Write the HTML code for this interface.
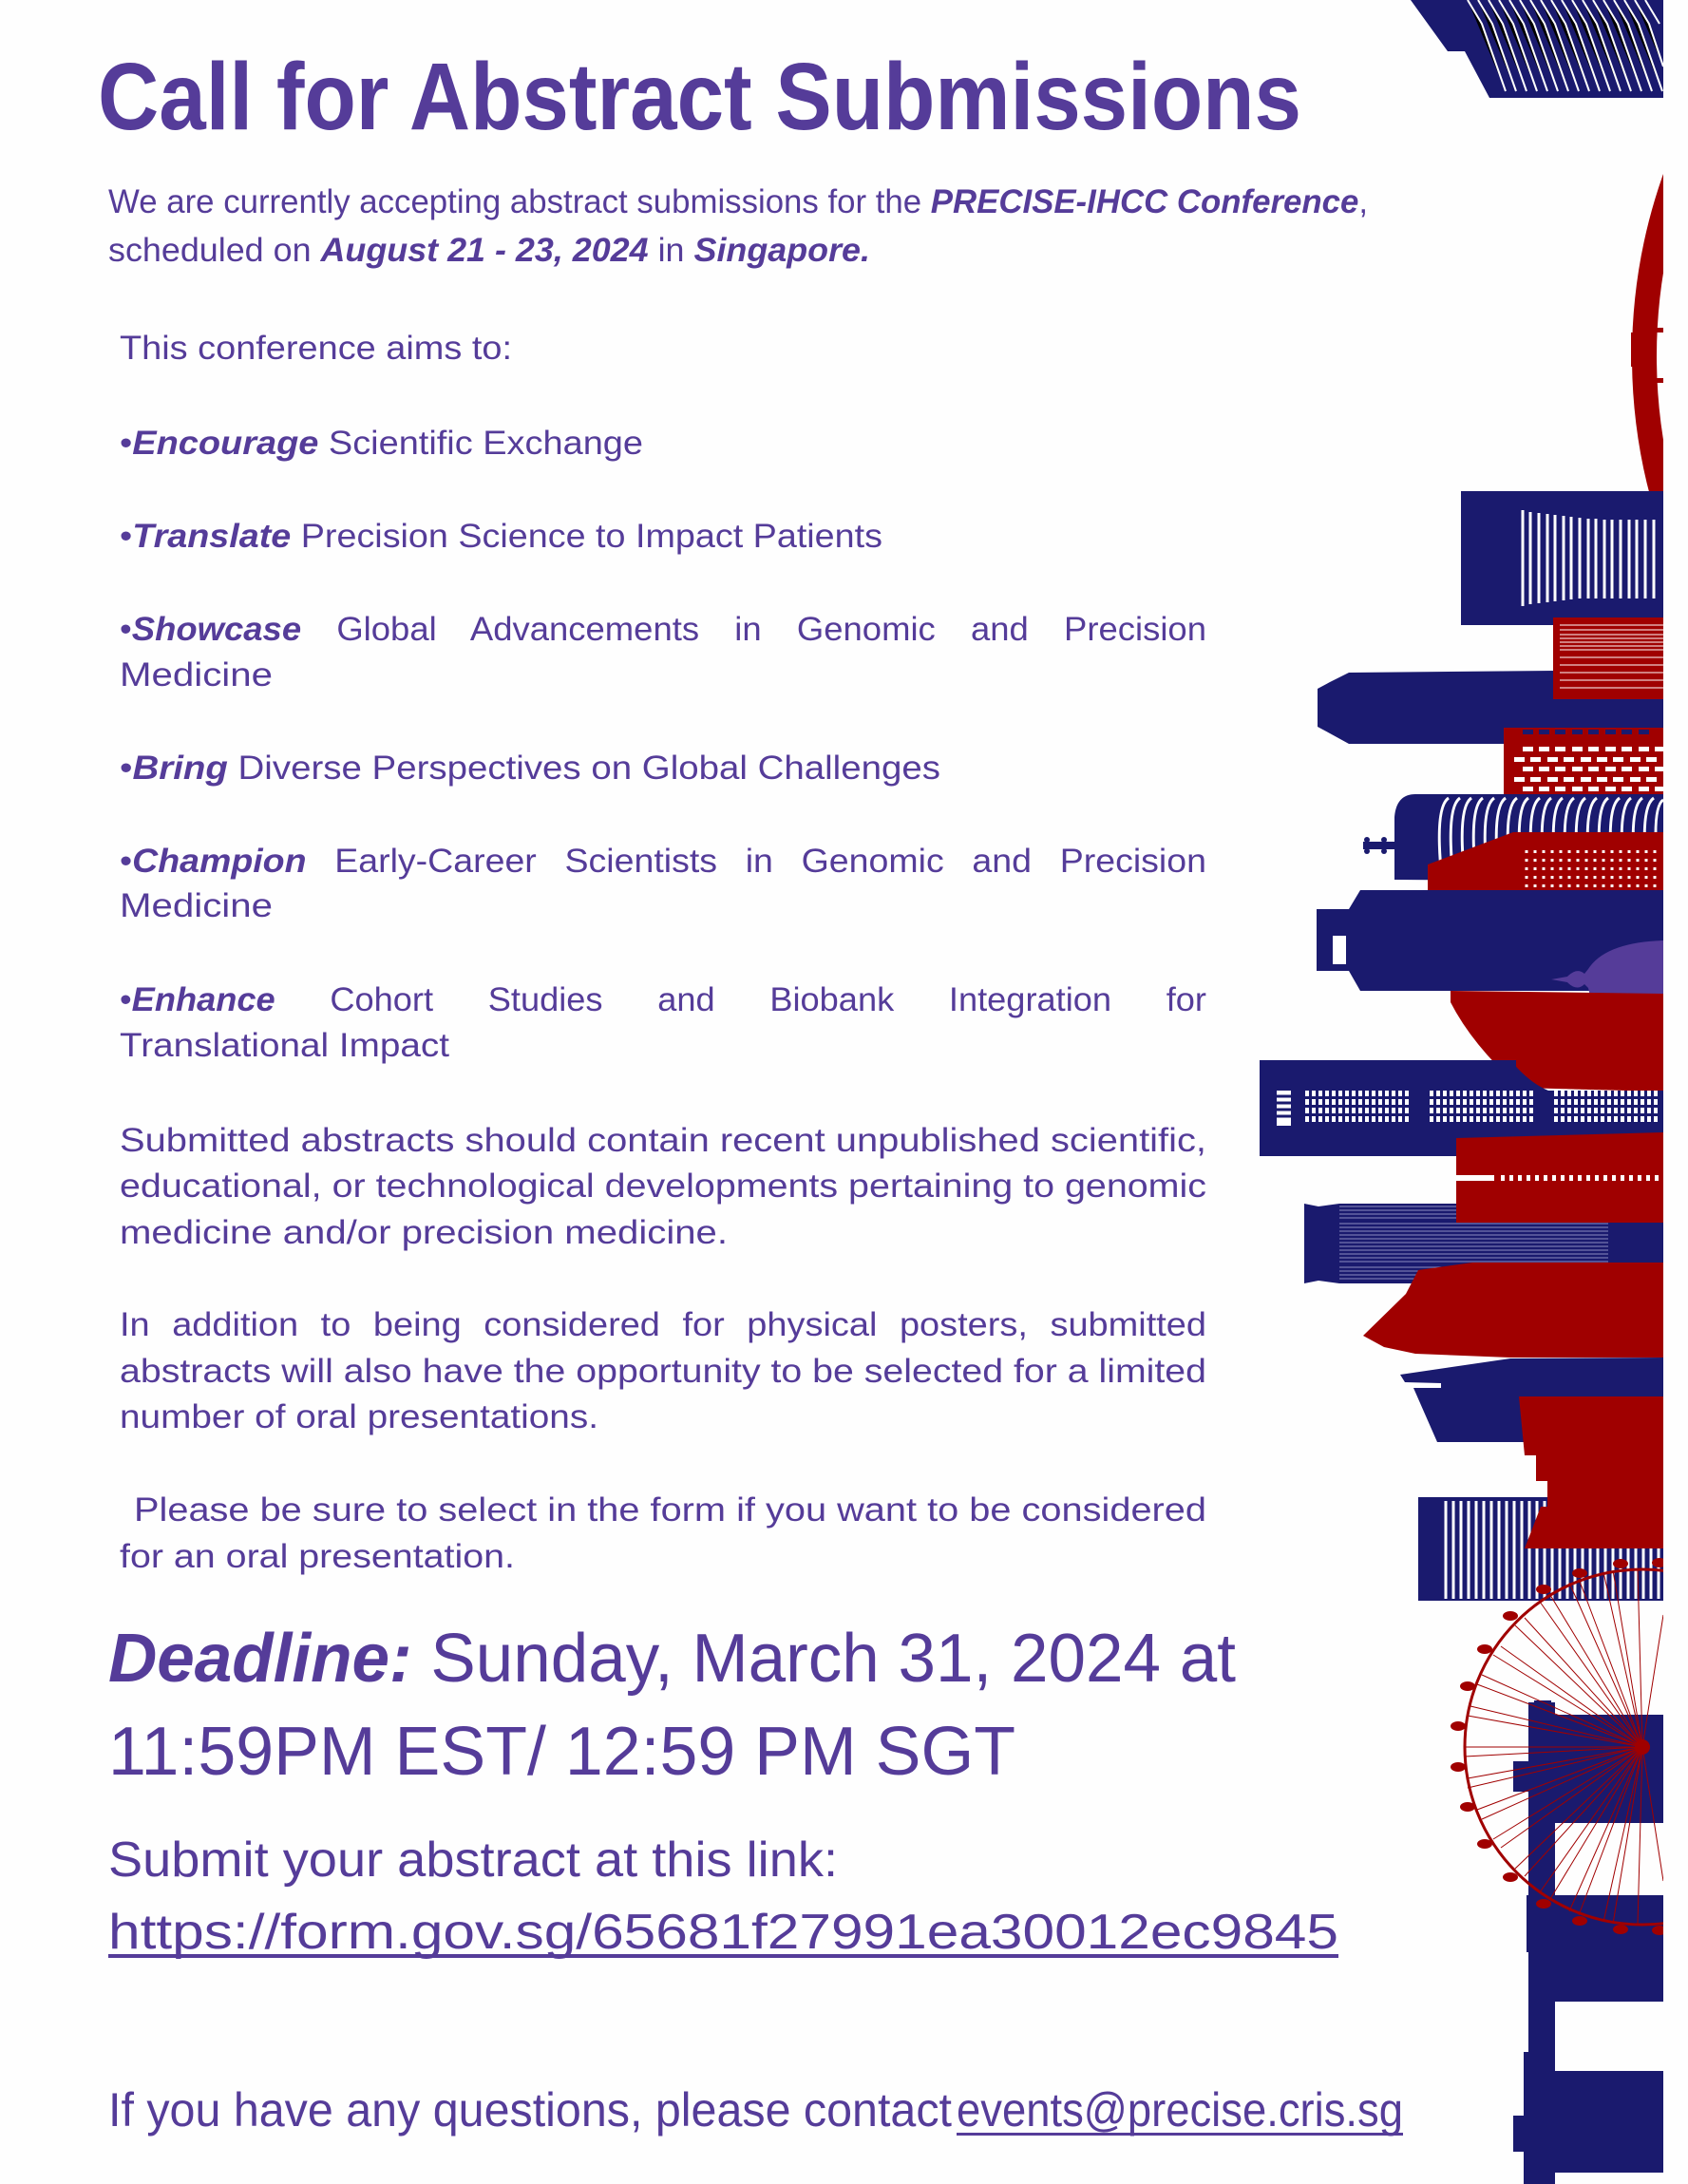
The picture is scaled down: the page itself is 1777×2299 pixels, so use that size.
<!DOCTYPE html>
<html><head><meta charset="utf-8"><style>
html,body{margin:0;padding:0;background:#fefefe;}
svg{display:block;}
text{font-family:"Liberation Sans",sans-serif;fill:#553c99;}
.b{font-weight:bold;font-style:italic;}
</style></head><body>
<svg width="1777" height="2299" viewBox="0 0 1777 2299" xmlns="http://www.w3.org/2000/svg">
<rect width="1777" height="2299" fill="#fefefe"/>
<!-- TEXT -->
<text x="103" y="136" font-size="100" font-weight="bold" textLength="1267" lengthAdjust="spacingAndGlyphs">Call for Abstract Submissions</text>
<text x="114" y="224" font-size="35" textLength="1326" lengthAdjust="spacingAndGlyphs">We are currently accepting abstract submissions for the <tspan class="b">PRECISE-IHCC Conference</tspan>,</text>
<text x="114" y="275" font-size="35" textLength="802" lengthAdjust="spacingAndGlyphs">scheduled on <tspan class="b">August 21 - 23, 2024</tspan> in <tspan class="b">Singapore.</tspan></text>
<text x="126" y="378" font-size="35" textLength="413" lengthAdjust="spacingAndGlyphs">This conference aims to:</text>
<text x="126" y="478" font-size="35" textLength="551" lengthAdjust="spacingAndGlyphs">•<tspan class="b">Encourage</tspan> Scientific Exchange</text>
<text x="126" y="576" font-size="35" textLength="803" lengthAdjust="spacingAndGlyphs">•<tspan class="b">Translate</tspan> Precision Science to Impact Patients</text>
<text x="126" y="674" font-size="35" word-spacing="26" textLength="1144" lengthAdjust="spacingAndGlyphs">•<tspan class="b">Showcase</tspan> Global Advancements in Genomic and Precision</text>
<text x="126" y="722" font-size="35" textLength="161" lengthAdjust="spacingAndGlyphs">Medicine</text>
<text x="126" y="820" font-size="35" textLength="864" lengthAdjust="spacingAndGlyphs">•<tspan class="b">Bring</tspan> Diverse Perspectives on Global Challenges</text>
<text x="126" y="918" font-size="35" word-spacing="18" textLength="1144" lengthAdjust="spacingAndGlyphs">•<tspan class="b">Champion</tspan> Early-Career Scientists in Genomic and Precision</text>
<text x="126" y="965" font-size="35" textLength="161" lengthAdjust="spacingAndGlyphs">Medicine</text>
<text x="126" y="1064" font-size="35" word-spacing="46" textLength="1144" lengthAdjust="spacingAndGlyphs">•<tspan class="b">Enhance</tspan> Cohort Studies and Biobank Integration for</text>
<text x="126" y="1112" font-size="35" textLength="347" lengthAdjust="spacingAndGlyphs">Translational Impact</text>
<text x="126" y="1212" font-size="35" textLength="1144" lengthAdjust="spacingAndGlyphs">Submitted abstracts should contain recent unpublished scientific,</text>
<text x="126" y="1260" font-size="35" textLength="1144" lengthAdjust="spacingAndGlyphs">educational, or technological developments pertaining to genomic</text>
<text x="126" y="1309" font-size="35" textLength="640" lengthAdjust="spacingAndGlyphs">medicine and/or precision medicine.</text>
<text x="126" y="1406" font-size="35" word-spacing="12" textLength="1144" lengthAdjust="spacingAndGlyphs">In addition to being considered for physical posters, submitted</text>
<text x="126" y="1455" font-size="35" textLength="1144" lengthAdjust="spacingAndGlyphs">abstracts will also have the opportunity to be selected for a limited</text>
<text x="126" y="1503" font-size="35" textLength="504" lengthAdjust="spacingAndGlyphs">number of oral presentations.</text>
<text x="141" y="1601" font-size="35" textLength="1129" lengthAdjust="spacingAndGlyphs">Please be sure to select in the form if you want to be considered</text>
<text x="126" y="1650" font-size="35" textLength="416" lengthAdjust="spacingAndGlyphs">for an oral presentation.</text>
<text x="114" y="1770" font-size="72" textLength="1187" lengthAdjust="spacingAndGlyphs"><tspan class="b">Deadline:</tspan> Sunday, March 31, 2024 at</text>
<text x="114" y="1868" font-size="72" textLength="955" lengthAdjust="spacingAndGlyphs">11:59PM EST/ 12:59 PM SGT</text>
<text x="114" y="1975" font-size="52" textLength="768" lengthAdjust="spacingAndGlyphs">Submit your abstract at this link:</text>
<text x="114" y="2051" font-size="52" textLength="1295" lengthAdjust="spacingAndGlyphs">https://form.gov.sg/65681f27991ea30012ec9845</text>
<rect x="114" y="2057" width="1295" height="4" fill="#553c99"/>
<text x="114" y="2238" font-size="50" textLength="888" lengthAdjust="spacingAndGlyphs">If you have any questions, please contact</text>
<text x="1007" y="2238" font-size="50" textLength="470" lengthAdjust="spacingAndGlyphs">events@precise.cris.sg</text>
<rect x="1007" y="2245" width="470" height="3" fill="#553c99"/>

<!-- SKYLINE -->
<g>
<polygon points="1485,0 1751,0 1751,103 1568,103 1542,54 1524,54" fill="#1a1a6e"/>
<g stroke="#fff" stroke-width="2">
<path d="M1545,0 L1560,25 L1585,96 M1556,0 L1571,25 L1596,96 M1567,0 L1582,25 L1607,96 M1578,0 L1593,25 L1618,96 M1589,0 L1604,25 L1629,96 M1600,0 L1615,25 L1640,96 M1611,0 L1626,25 L1651,96 M1622,0 L1637,25 L1662,96 M1633,0 L1648,25 L1673,96 M1644,0 L1659,25 L1684,96 M1655,0 L1670,25 L1695,96 M1666,0 L1681,25 L1706,96 M1677,0 L1692,25 L1717,96 M1688,0 L1703,25 L1728,96 M1699,0 L1714,25 L1739,96 M1710,0 L1725,25 L1750,96 M1721,0 L1736,25 L1751,70 M1732,0 L1747,25"/>
</g>
<circle cx="2293" cy="375" r="562" fill="none" stroke="#a00000" stroke-width="26"/>
<rect x="1717" y="350" width="10" height="36" fill="#a00000"/>
<rect x="1725" y="345" width="26" height="5" fill="#a00000"/>
<rect x="1725" y="398" width="26" height="5" fill="#a00000"/>
<rect x="1538" y="517" width="213" height="141" fill="#1a1a6e"/>
<g stroke="#fff" stroke-width="3">
<path d="M1603,537V638M1611,539V636M1620,540V635M1629,541V634M1637,542V633M1646,543V632M1654,544V631M1663,545V630M1672,546V630M1680,546V630M1689,547V630M1697,547V630M1706,547V630M1715,547V630M1723,547V630M1732,547V630M1741,547V630"/>
</g>
<polygon points="1387,725 1400,718 1420,708 1751,705 1751,783 1420,783 1400,772 1387,765" fill="#1a1a6e"/>
<rect x="1635" y="650" width="116" height="86" fill="#a00000"/>
<g stroke="#fff" stroke-width="1"><path d="M1642,658H1751M1642,663H1751M1642,668H1751M1642,672H1751M1642,676H1751M1642,680H1751M1642,684H1751M1642,692H1751M1642,700H1751M1642,708H1751M1642,716H1751M1642,724H1751"/></g>
<rect x="1583" y="766" width="168" height="78" fill="#a00000"/>
<g fill="#fff">
<rect x="1603" y="786" width="11" height="5"/><rect x="1620" y="786" width="11" height="5"/><rect x="1637" y="786" width="11" height="5"/><rect x="1655" y="786" width="11" height="5"/><rect x="1672" y="786" width="11" height="5"/><rect x="1690" y="786" width="11" height="5"/><rect x="1707" y="786" width="11" height="5"/><rect x="1725" y="786" width="11" height="5"/><rect x="1742" y="786" width="9" height="5"/>
<rect x="1594" y="797" width="11" height="5"/><rect x="1611" y="797" width="11" height="5"/><rect x="1629" y="797" width="11" height="5"/><rect x="1646" y="797" width="11" height="5"/><rect x="1664" y="797" width="11" height="5"/><rect x="1681" y="797" width="11" height="5"/><rect x="1698" y="797" width="11" height="5"/><rect x="1716" y="797" width="11" height="5"/><rect x="1733" y="797" width="11" height="5"/>
<rect x="1603" y="807" width="11" height="5"/><rect x="1620" y="807" width="11" height="5"/><rect x="1637" y="807" width="11" height="5"/><rect x="1655" y="807" width="11" height="5"/><rect x="1672" y="807" width="11" height="5"/><rect x="1690" y="807" width="11" height="5"/><rect x="1707" y="807" width="11" height="5"/><rect x="1725" y="807" width="11" height="5"/><rect x="1742" y="807" width="9" height="5"/>
<rect x="1594" y="818" width="11" height="5"/><rect x="1611" y="818" width="11" height="5"/><rect x="1629" y="818" width="11" height="5"/><rect x="1646" y="818" width="11" height="5"/><rect x="1664" y="818" width="11" height="5"/><rect x="1681" y="818" width="11" height="5"/><rect x="1698" y="818" width="11" height="5"/><rect x="1716" y="818" width="11" height="5"/><rect x="1733" y="818" width="11" height="5"/>
<rect x="1603" y="828" width="11" height="5"/><rect x="1620" y="828" width="11" height="5"/><rect x="1637" y="828" width="11" height="5"/><rect x="1655" y="828" width="11" height="5"/><rect x="1672" y="828" width="11" height="5"/><rect x="1690" y="828" width="11" height="5"/><rect x="1707" y="828" width="11" height="5"/><rect x="1725" y="828" width="11" height="5"/><rect x="1742" y="828" width="9" height="5"/>
</g>
<g fill="#1a1a6e"><rect x="1603" y="768" width="11" height="5"/><rect x="1620" y="768" width="11" height="5"/><rect x="1637" y="768" width="11" height="5"/><rect x="1655" y="768" width="11" height="5"/><rect x="1672" y="768" width="11" height="5"/><rect x="1690" y="768" width="11" height="5"/><rect x="1707" y="768" width="11" height="5"/><rect x="1725" y="768" width="11" height="5"/></g>
<path d="M1468,926 L1468,860 Q1470,836 1490,836 L1751,836 L1751,928 Z" fill="#1a1a6e"/>
<g stroke="#fff" stroke-width="3" fill="none">
<path d="M1518,926 Q1510,850 1525,840 M1530,926 Q1522,850 1537,840 M1542,926 Q1534,850 1549,840 M1554,926 Q1546,850 1561,840 M1566,926 Q1558,850 1573,840 M1578,926 Q1570,850 1585,840 M1590,926 Q1582,850 1597,840 M1602,926 Q1594,850 1609,840 M1614,926 Q1606,850 1621,840 M1626,926 Q1618,850 1633,840 M1638,926 Q1630,850 1645,840 M1650,926 Q1642,850 1657,840 M1662,926 Q1654,850 1669,840 M1674,926 Q1666,850 1681,840 M1686,926 Q1678,850 1693,840 M1698,926 Q1690,850 1705,840 M1710,926 Q1702,850 1717,840 M1722,926 Q1714,850 1729,840 M1734,926 Q1726,850 1741,840 M1746,926 Q1738,850 1751,842"/>
</g>
<rect x="1435" y="886" width="33" height="8" fill="#1a1a6e"/>
<circle cx="1439" cy="884" r="3" fill="#1a1a6e"/><circle cx="1439" cy="896" r="3" fill="#1a1a6e"/><circle cx="1457" cy="884" r="3" fill="#1a1a6e"/><circle cx="1457" cy="896" r="3" fill="#1a1a6e"/>
<polygon points="1503,910 1593,876 1751,876 1751,985 1593,985 1503,949" fill="#a00000"/>
<g stroke="#fff" stroke-width="3" stroke-dasharray="3,6">
<path d="M1607,895V970M1616,895V970M1625,895V970M1634,895V970M1643,895V970M1652,895V970M1661,895V970M1670,895V970M1679,895V970M1688,895V970M1697,895V970M1706,895V970M1715,895V970M1724,895V970M1733,895V970M1742,895V970"/>
</g>
<polygon points="1386,957 1420,957 1432,937 1751,937 1751,1043 1432,1043 1420,1022 1386,1022" fill="#1a1a6e"/>
<rect x="1403" y="985" width="14" height="30" fill="#fff"/>
<path d="M1633,1031 L1650,1028 Q1660,1018 1668,1025 L1672,1020 Q1690,992 1751,990 L1751,1070 L1700,1070 Q1675,1060 1672,1040 L1668,1036 Q1660,1044 1650,1034 Z" fill="#553c99"/>
<path d="M1527,1043 L1751,1046 L1751,1149 L1600,1145 Q1550,1100 1527,1055 Z" fill="#a00000"/>
<rect x="1326" y="1116" width="270" height="101" fill="#1a1a6e"/>
<path d="M1590,1116 Q1610,1140 1630,1148 L1751,1148 L1751,1217 L1590,1217 Z" fill="#1a1a6e"/>
<rect x="1344" y="1148" width="15" height="37" fill="#fff"/>
<g stroke="#1a1a6e" stroke-width="3"><path d="M1344,1154H1359M1344,1161H1359M1344,1168H1359M1344,1175H1359"/></g>
<g stroke="#fff" stroke-width="6" stroke-dasharray="4,3">
<path d="M1374,1151H1483M1374,1160H1483M1374,1169H1483M1374,1178H1483M1505,1151H1615M1505,1160H1615M1505,1169H1615M1505,1178H1615M1636,1151H1747M1636,1160H1747M1636,1169H1747M1636,1178H1747"/>
</g>
<polygon points="1533,1198 1751,1192 1751,1287 1533,1282" fill="#a00000"/>
<rect x="1533" y="1237" width="40" height="6" fill="#fff"/>
<path d="M1580,1240H1751" stroke="#fff" stroke-width="6" stroke-dasharray="4,5"/>
<polygon points="1373,1267 1388,1270 1410,1267 1751,1267 1751,1351 1410,1351 1388,1348 1373,1351" fill="#1a1a6e"/>
<rect x="1533" y="1265" width="218" height="22" fill="#a00000"/>
<g stroke="#8c8cc0" stroke-width="1"><path d="M1410,1270H1533M1410,1274H1533M1410,1278H1533M1410,1282H1533M1410,1288H1693M1410,1292H1693M1410,1296H1693M1410,1300H1693M1410,1304H1693M1410,1308H1693M1410,1312H1693M1410,1316H1693M1410,1320H1693M1410,1324H1693M1410,1328H1693M1410,1334H1693M1410,1338H1693M1410,1342H1693M1410,1346H1693"/></g>
<polygon points="1435,1406 1480,1362 1493,1337 1550,1329 1751,1329 1751,1429 1590,1429 1490,1425 1457,1418" fill="#a00000"/>
<polygon points="1474,1447 1590,1430 1751,1429 1751,1518 1513,1518 1488,1461 1517,1461 1517,1456 1479,1455" fill="#1a1a6e"/>
<rect x="1493" y="1576" width="258" height="109" fill="#1a1a6e"/>
<g stroke="#fff" stroke-width="3"><path d="M1522,1580V1683M1530,1580V1683M1538,1580V1683M1546,1580V1683M1554,1580V1683M1562,1580V1683M1570,1580V1683M1578,1580V1683M1586,1580V1683M1594,1580V1683M1602,1580V1683M1610,1580V1683M1618,1580V1683M1626,1580V1683M1634,1580V1683M1642,1580V1683M1650,1580V1683M1658,1580V1683M1666,1580V1683M1674,1580V1683M1682,1580V1683M1690,1580V1683M1698,1580V1683M1706,1580V1683M1714,1580V1683M1722,1580V1683M1730,1580V1683M1738,1580V1683M1746,1580V1683"/></g>
<polygon points="1599,1470 1751,1470 1751,1630 1605,1630 1622,1586 1629,1586 1629,1559 1617,1559 1617,1532 1605,1532" fill="#a00000"/>
<g fill="#1a1a6e">
<rect x="1609" y="1792" width="28" height="507"/>
<rect x="1615" y="1790" width="18" height="4"/>
<rect x="1637" y="1805" width="114" height="114"/>
<rect x="1593" y="1854" width="20" height="32"/>
<rect x="1637" y="1995" width="114" height="112"/>
<rect x="1607" y="1995" width="10" height="60"/>
<rect x="1637" y="2180" width="114" height="107"/>
<rect x="1593" y="2227" width="20" height="38"/>
<rect x="1604" y="2160" width="10" height="139"/>
</g>
<g stroke="#a00000" fill="none">
<circle cx="1729" cy="1839" r="187" stroke-width="3"/>
<g stroke-width="1">
<path d="M1729,1839L1542,1839M1729,1839L1545,1806M1729,1839L1555,1773M1729,1839L1572,1742M1729,1839L1595,1711M1729,1839L1621,1686M1729,1839L1652,1666M1729,1839L1688,1655M1729,1839L1724,1652M1729,1839L1545,1872M1729,1839L1555,1905M1729,1839L1572,1936M1729,1839L1595,1967M1729,1839L1621,1992M1729,1839L1652,2012M1729,1839L1688,2023M1729,1839L1724,2026M1729,1839L1751,1700M1729,1839L1751,1980"/>
<path d="M1729,1839L1542,1849M1729,1839L1548,1796M1729,1839L1560,1763M1729,1839L1580,1733M1729,1839L1605,1703M1729,1839L1632,1679M1729,1839L1662,1662M1729,1839L1698,1653M1729,1839L1545,1882M1729,1839L1560,1915M1729,1839L1580,1945M1729,1839L1605,1975M1729,1839L1632,1999M1729,1839L1662,2016M1729,1839L1698,2025"/>
</g>
</g>
<g fill="#a00000">
<circle cx="1729" cy="1839" r="8"/>
<ellipse cx="1535" cy="1817" rx="8" ry="5"/><ellipse cx="1535" cy="1860" rx="8" ry="5"/>
<ellipse cx="1545" cy="1775" rx="8" ry="5"/><ellipse cx="1545" cy="1902" rx="8" ry="5"/>
<ellipse cx="1563" cy="1736" rx="8" ry="5"/><ellipse cx="1563" cy="1941" rx="8" ry="5"/>
<ellipse cx="1590" cy="1701" rx="8" ry="5"/><ellipse cx="1590" cy="1976" rx="8" ry="5"/>
<ellipse cx="1625" cy="1673" rx="8" ry="5"/><ellipse cx="1625" cy="2004" rx="8" ry="5"/>
<ellipse cx="1663" cy="1656" rx="8" ry="5"/><ellipse cx="1663" cy="2022" rx="8" ry="5"/>
<ellipse cx="1706" cy="1646" rx="8" ry="5"/><ellipse cx="1706" cy="2031" rx="8" ry="5"/>
<ellipse cx="1747" cy="1645" rx="8" ry="5"/><ellipse cx="1747" cy="2032" rx="8" ry="5"/>
</g>
</g>
<rect x="1751" y="0" width="26" height="2299" fill="#fefefe"/>
</svg>
</body></html>
